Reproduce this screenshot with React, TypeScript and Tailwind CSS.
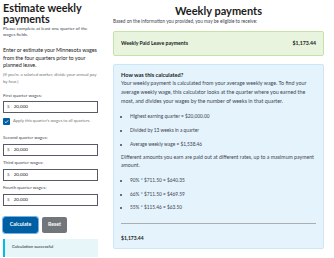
import React from 'react';

const quarters = ['Second quarter wages:', 'Third quarter wages:', 'Fourth quarter wages:'];

function WageInput() {
  return (
    <div className="flex items-center h-[12px] border border-[#565c65] bg-white px-[3px] gap-[4px] text-[4.6px]">
      <span className="text-[#71767a]">$</span>
      <span className="text-[#1b1b1b]">20,000</span>
    </div>
  );
}

export default function App() {
  return (
    <div
      className="w-[334px] h-[258px] overflow-hidden bg-white flex text-[#1b1b1b]"
      style={{ fontFamily: 'Lato, "Liberation Sans", sans-serif' }}
    >
      {/* Left: form */}
      <div className="w-[95px] ml-[3px] pt-[2px] flex flex-col shrink-0">
        <h2 className="text-[10.8px] leading-[11px] font-bold">Estimate weekly payments</h2>
        <p className="text-[4.5px] leading-[6px] text-[#3d4551] mt-[2px]">
          Please complete at least one quarter of the wages fields.
        </p>
        <p className="text-[5.45px] leading-[7.5px] mt-[9px] tracking-[-0.05px]">
          Enter or estimate your Minnesota wages from the four quarters prior to your planned leave.
        </p>
        <p className="text-[4.3px] leading-[7px] mt-[1px] text-[#71767a]">
          (If you&apos;re a salaried worker, divide your annual pay by four.)
        </p>

        <label className="text-[4.5px] leading-[6px] mt-[8px] text-[#3d4551]">First quarter wages:</label>
        <div className="mt-[2px]">
          <WageInput />
        </div>
        <div className="flex items-center gap-[3px] mt-[5px] h-[7px]">
          <span className="w-[7px] h-[7px] rounded-[1px] bg-[#005ea2] flex items-center justify-center">
            <svg width="5" height="5" viewBox="0 0 10 10">
              <path d="M1.5 5.2 L4 7.5 L8.5 2.5" stroke="white" strokeWidth="1.6" fill="none" />
            </svg>
          </span>
          <span className="text-[4.3px] text-[#71767a]">Apply this quarter&apos;s wages to all quarters.</span>
        </div>

        {quarters.map((q, i) => (
          <div key={q} className={i === 0 ? 'mt-[10px]' : 'mt-[4px]'}>
            <label className="block text-[4.5px] leading-[6px] text-[#3d4551]">{q}</label>
            <div className="mt-[3px]">
              <WageInput />
            </div>
          </div>
        ))}

        <div className="flex gap-[4px] mt-[11px]">
          <button className="h-[16px] w-[35px] rounded-[2px] bg-[#005ea2] text-white text-[5.2px] font-bold outline outline-[1.5px] outline-[#73b3e7] outline-offset-[0.5px]">
            Calculate
          </button>
          <button className="h-[16px] w-[25px] rounded-[2px] bg-[#71767a] text-white text-[5.2px] font-bold">
            Reset
          </button>
        </div>

        <div className="mt-[6px] h-[18px] bg-[#e7f6f8] border-l-[2px] border-[#00bde3] flex items-center pl-[7px]">
          <span className="text-[4.3px] text-[#1b1b1b]">Calculation successful</span>
        </div>
      </div>

      {/* Right: results */}
      <div className="flex-1 ml-[15px] mr-[10px] pt-[5px] flex flex-col">
        <h2 className="text-[11px] leading-[12px] font-bold text-center">Weekly payments</h2>
        <p className="text-[4.7px] leading-[7px] mt-[1px] text-[#3d4551]">
          Based on the information you provided, you may be eligible to receive:
        </p>
        <div className="mt-[6px] h-[25px] shrink-0 rounded-[2px] border border-[#c7e2a6] bg-[#e9f4de] flex items-center justify-between px-[7px]">
          <span className="text-[5.2px] font-bold">Weekly Paid Leave payments</span>
          <span className="text-[5.2px] font-bold">$1,173.44</span>
        </div>

        <div className="mt-[8px] h-[185px] shrink-0 rounded-[2px] bg-[#e5f3fc] border border-[#cde6f6] px-[7px] pt-[6px]">
          <h3 className="text-[5.6px] leading-[8px] font-bold">How was this calculated?</h3>
          <p className="text-[5.35px] leading-[9px] text-[#3d4551]">
            Your weekly payment is calculated from your average weekly wage. To find your average weekly
            wage, this calculator looks at the quarter where you earned the most, and divides your wages by
            the number of weeks in that quarter.
          </p>
          <ul className="mt-[3px] text-[4.8px] leading-[14px] text-[#3d4551] list-disc pl-[9px]">
            <li>Highest earning quarter = $20,000.00</li>
            <li>Divided by 13 weeks in a quarter</li>
            <li>Average weekly wage = $1,538.46</li>
          </ul>
          <p className="text-[5.2px] leading-[8px] text-[#3d4551] mt-[2px]">
            Different amounts you earn are paid out at different rates, up to a maximum payment amount.
          </p>
          <ul className="mt-[5px] text-[4.8px] leading-[13.5px] text-[#3d4551] list-disc pl-[9px]">
            <li>90% * $711.50 = $640.35</li>
            <li>66% * $711.50 = $469.59</li>
            <li>55% * $115.46 = $63.50</li>
          </ul>
          <div className="mt-[8px] h-[1px] bg-[#a9aeb1]" />
          <p className="mt-[10px] text-[5px] leading-[8px] font-bold">$1,173.44</p>
        </div>
      </div>
    </div>
  );
}
